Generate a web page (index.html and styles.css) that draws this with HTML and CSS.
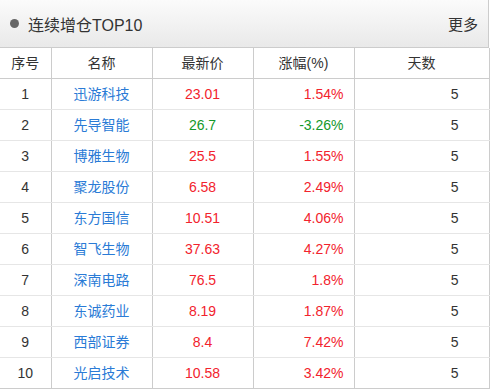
FILE: index.html
```html
<!DOCTYPE html>
<html lang="zh-CN">
<head>
<meta charset="utf-8">
<link rel="stylesheet" href="styles.css">
</head>
<body>
<div class="panel">
  <div class="panel-head">
    <div class="title"><span class="dot"></span>连续增仓TOP10</div>
    <a class="more">更多</a>
  </div>
  <table class="grid">
    <colgroup>
      <col class="c1"><col class="c2"><col class="c3"><col class="c4"><col class="c5">
    </colgroup>
    <thead>
      <tr><th>序号</th><th>名称</th><th>最新价</th><th>涨幅(%)</th><th>天数</th></tr>
    </thead>
    <tbody>
      <tr><td>1</td><td class="name">迅游科技</td><td class="up">23.01</td><td class="pct up">1.54%</td><td class="days">5</td></tr>
      <tr><td>2</td><td class="name">先导智能</td><td class="down">26.7</td><td class="pct down">-3.26%</td><td class="days">5</td></tr>
      <tr><td>3</td><td class="name">博雅生物</td><td class="up">25.5</td><td class="pct up">1.55%</td><td class="days">5</td></tr>
      <tr><td>4</td><td class="name">聚龙股份</td><td class="up">6.58</td><td class="pct up">2.49%</td><td class="days">5</td></tr>
      <tr><td>5</td><td class="name">东方国信</td><td class="up">10.51</td><td class="pct up">4.06%</td><td class="days">5</td></tr>
      <tr><td>6</td><td class="name">智飞生物</td><td class="up">37.63</td><td class="pct up">4.27%</td><td class="days">5</td></tr>
      <tr><td>7</td><td class="name">深南电路</td><td class="up">76.5</td><td class="pct up">1.8%</td><td class="days">5</td></tr>
      <tr><td>8</td><td class="name">东诚药业</td><td class="up">8.19</td><td class="pct up">1.87%</td><td class="days">5</td></tr>
      <tr><td>9</td><td class="name">西部证券</td><td class="up">8.4</td><td class="pct up">7.42%</td><td class="days">5</td></tr>
      <tr><td>10</td><td class="name">光启技术</td><td class="up">10.58</td><td class="pct up">3.42%</td><td class="days">5</td></tr>
    </tbody>
  </table>
</div>
</body>
</html>
```

FILE: styles.css
```css
html, body {
  margin: 0;
  padding: 0;
  background: #fff;
}
body {
  font-family: "Liberation Sans", "Noto Sans CJK SC", Arial, sans-serif;
  color: #333;
  font-size: 14px;
}
.panel {
  width: 489px;
}
.panel-head {
  height: 47px;
  border-bottom: 1px solid #cccccc;
  border-right: 1px solid #cccccc;
  background: linear-gradient(to bottom, #fbfbfb, #e9e9e9);
  display: flex;
  align-items: center;
  justify-content: space-between;
  padding: 0 10px 0 10px;
  box-sizing: content-box;
  width: 468px;
}
.title {
  display: flex;
  align-items: center;
  font-size: 16px;
  color: #333;
}
.dot {
  width: 9px;
  height: 9px;
  border-radius: 50%;
  background: #666;
  margin-right: 9px;
}
.more {
  font-size: 15px;
  color: #333;
}
.grid {
  border-collapse: collapse;
  table-layout: fixed;
  width: 489px;
}
.c1 { width: 51px; }
.c2 { width: 101px; }
.c3 { width: 101px; }
.c4 { width: 101px; }
.c5 { width: 135px; }
.grid th,
.grid td {
  height: 30px;
  padding: 0;
  line-height: 30px;
  text-align: center;
  font-weight: normal;
  border-left: 1px solid #cccccc;
  border-right: 1px solid #cccccc;
  border-bottom: 1px solid #e6e6e6;
}
.grid th:first-child,
.grid td:first-child {
  border-left: none;
}
.grid th {
  color: #333;
  border-bottom: 1px solid #cccccc;
}
.grid tbody tr:last-child td {
  border-bottom: 1px solid #cccccc;
}
.name { color: #2a7bd6; }
.up { color: #f2232d; }
.down { color: #14982a; }
.pct {
  text-align: right !important;
  padding-right: 10px !important;
}
.days {
  text-align: right !important;
  padding-right: 30px !important;
}
```
